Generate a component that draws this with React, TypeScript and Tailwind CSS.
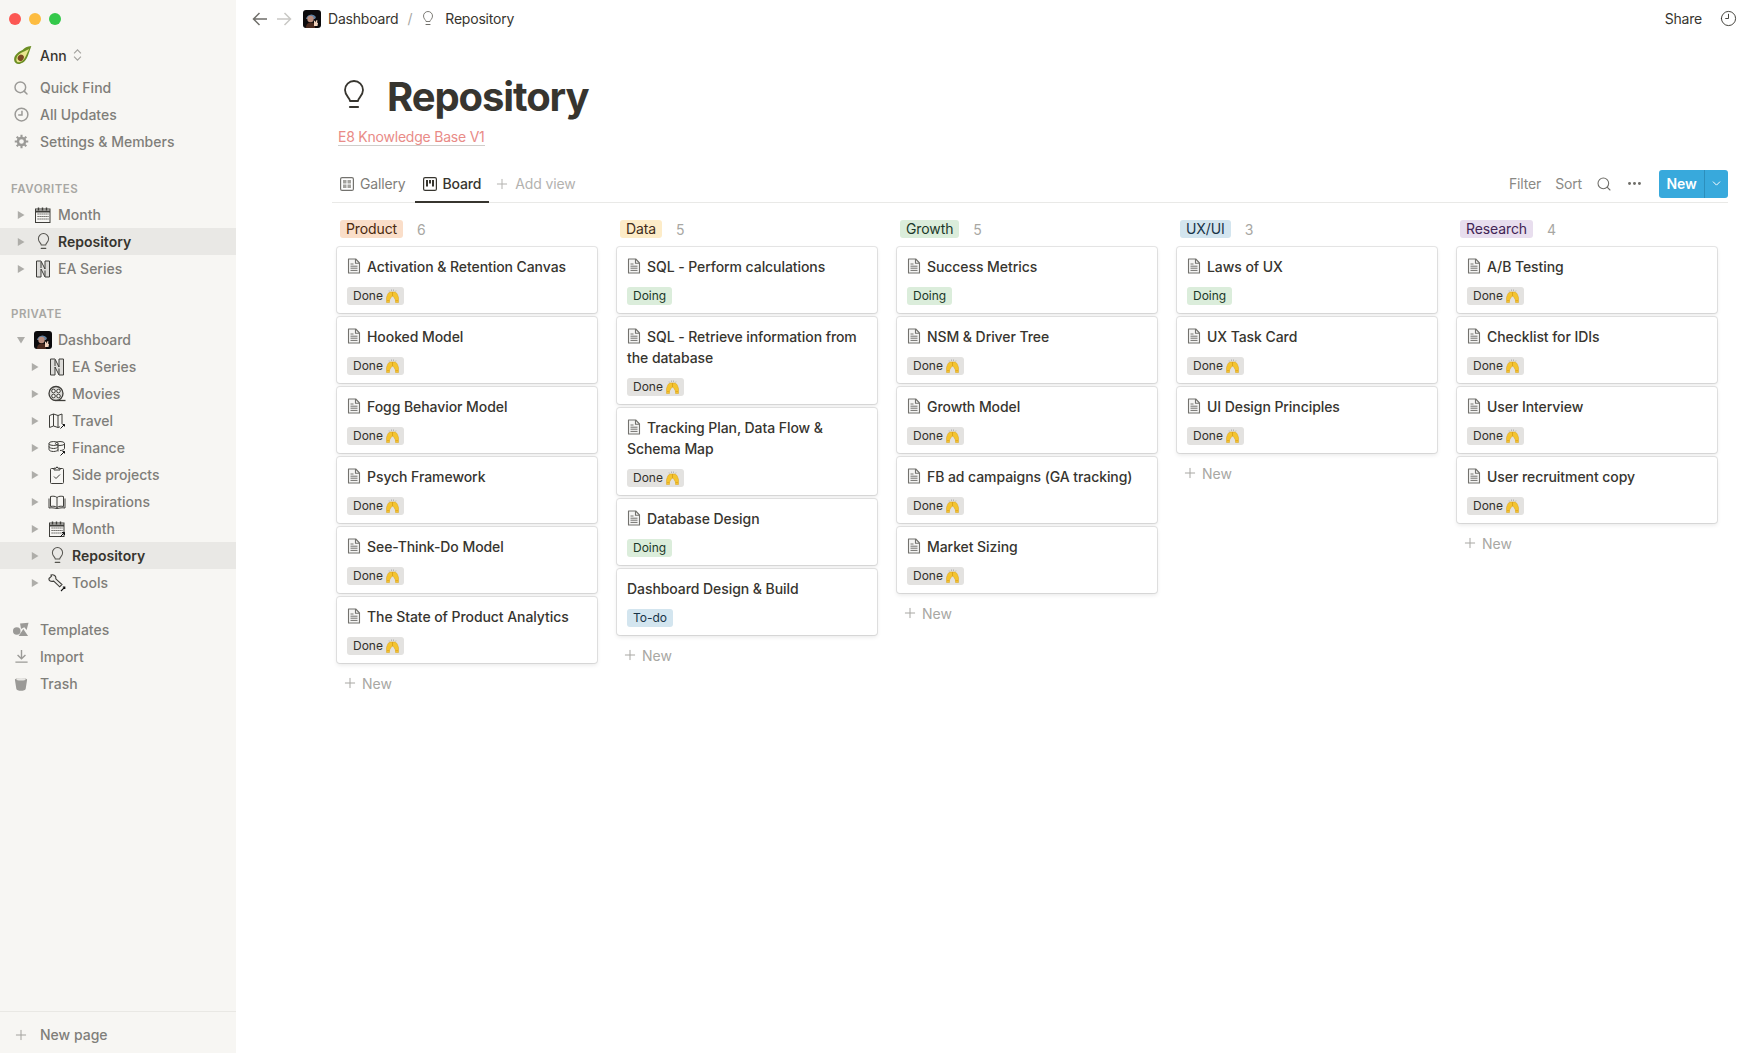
import React from "react";
import { ChevronDown, Clock3, MoreHorizontal, Plus, Search } from "lucide-react";

type IconProps = { className?: string };

// Hand drawn notion style icons
const Bulb = ({ className = "" }: IconProps) => (
  <svg viewBox="0 0 22 30" fill="none" stroke="currentColor" strokeWidth="1.800" className={className}>
    <path d="M7 21c0-3-5-5-5-11a9 9 0 0 1 18 0c0 6-5 8-5 11z" strokeLinejoin="round" />
    <path d="M7 27h8" strokeLinecap="round" strokeWidth="2.200" />
  </svg>
);

const PageIcon = () => (
  <svg viewBox="0 0 14 16" fill="none" stroke="#73726e" strokeWidth="1.100" className="h-4 w-[14px] shrink-0">
    <path d="M1.500 1h7.200l3.800 4v10h-11z" fill="#f5f5f4" strokeLinejoin="round" />
    <path d="M8.500 1v4.200h4" />
    <path d="M3.500 6h3M3.500 8.200h7M3.500 10.200h7M3.500 12.400h7" strokeWidth="1" />
  </svg>
);

const Hands = () => (
  <svg viewBox="0 0 13 14" className="ml-[3px] h-[14px] w-[13px]">
    <path d="M.5 13.500V8.500L2 4.500 4 3h5l2 1.500 1.500 4v5H9.500V11L8 8.500 6.500 7 5 8.500 3.500 11v2.500z" fill="#f4c430" stroke="#d9a21b" strokeWidth=".5" />
    <path d="M6.500 3v4" stroke="#c98f14" strokeWidth=".6" />
    <path d="M1 11.500h2.500M9.500 11.500H12" stroke="#e6ac1e" strokeWidth="1.200" />
    <path d="M3 1.500l.4 1M5.500.5v1.500M7.500.5v1.500M10 1.500l-.4 1" stroke="#999" strokeWidth=".6" />
  </svg>
);

const Avocado = () => (
  <svg viewBox="0 0 18 18" className="h-5 w-5">
    <path d="M16.500 1c-4 .5-6 1.500-8 3.500C5 6 1 9 1 13c0 3 2.500 4.500 5 4 4-1 6-3.500 7.500-7.500 1-3 2-5.500 3-8.500z" fill="#6b8e23" />
    <path d="M14.500 3.500C11 5 9.500 6 7.500 7 4.500 8.500 3 11 3 13c0 2 1.500 3 3 2.500 3-.8 4.500-3 5.800-6 .9-2 1.800-4 2.700-6z" fill="#e9e58c" />
    <ellipse cx="7" cy="11.500" rx="2.600" ry="3" transform="rotate(35 7 11.500)" fill="#7a4a21" />
  </svg>
);

const Avatar = ({ className = "" }: IconProps) => (
  <svg viewBox="0 0 18 18" className={className}>
    <rect width="18" height="18" rx="3" fill="#0b0a0c" />
    <path d="M3 9a5.500 5.500 0 0 1 10 -2l-1 2H4z" fill="#5f7f9f" />
    <circle cx="7.500" cy="9" r="3.200" fill="#b98d7d" />
    <path d="M3 18c0-4 2-5.500 5-5.500s4 2 4 5.500z" fill="#4a2a1e" />
    <path d="M11 16v-5l1-.5.500 2 1-2.500 1 .5-.5 2 1 .5-.5 3z" fill="#f2d3bd" />
  </svg>
);

const stroke = { fill: "none", stroke: "#3f3e3a", strokeWidth: 1 };

const Calendar = ({ arrow }: { arrow?: boolean }) => (
  <svg viewBox="0 0 18 18" {...stroke} className="h-[18px] w-[18px]">
    <rect x="1.500" y="3" width="14.500" height="13.500" />
    <path d="M1.500 5.500h14.500" strokeWidth="2" />
    <path d="M4.500 1.500v3M8.500 1.500v3M12.500 1.500v3" strokeWidth="1.400" />
    <path d="M3.500 8h11M3.500 10.500h11M3.500 13h11" strokeDasharray="1.200 .8" />
    {arrow && <path d="M12 17l4.500-4.500M14 12.500h2.500V15" stroke="#111" />}
  </svg>
);

const Netflix = () => (
  <svg viewBox="0 0 18 18" fill="#dddcd9" stroke="#3f3e3a" strokeWidth="1" className="h-[18px] w-[18px]">
    <path d="M2.500 1H7l4 8V1h4.500v16H11l-4-8v8H2.500z" />
    <path d="M7 2v6M11 10.500v6" />
  </svg>
);

const Reel = () => (
  <svg viewBox="0 0 18 18" {...stroke} className="h-[18px] w-[18px]">
    <circle cx="8" cy="8.500" r="7" strokeWidth="1.300" fill="#dddcd9" />
    <circle cx="5.500" cy="6" r="1.800" fill="#f7f6f3" />
    <circle cx="10.500" cy="6" r="1.800" fill="#f7f6f3" />
    <circle cx="5.500" cy="11" r="1.800" fill="#f7f6f3" />
    <circle cx="10.500" cy="11" r="1.800" fill="#f7f6f3" />
    <path d="M9 15.500h8.500" strokeWidth="1.300" />
  </svg>
);

const MapIcon = () => (
  <svg viewBox="0 0 18 18" {...stroke} className="h-[18px] w-[18px]">
    <path d="M1.500 3.500l4-1.500 4.500 1.500 4-1.500v10M1.500 3.500v12l4-1.500 4.500 1.500 2-.7M5.500 2v12M10 3.500v12" />
    <path d="M12.500 16.500l4-4M14.500 12.500h2v2" stroke="#111" />
  </svg>
);

const Coins = () => (
  <svg viewBox="0 0 18 18" {...stroke} className="h-[18px] w-[18px]">
    <ellipse cx="5.500" cy="4.500" rx="4.500" ry="2" />
    <ellipse cx="12" cy="4.500" rx="4.500" ry="2" />
    <path d="M1 4.500v6c0 1 2 2 4.500 2s4.500-1 4.500-2M1 7.500c0 1 2 2 4.500 2s4.500-1 4.500-2M16.500 4.500v5c0 1-2 2-4.500 2" />
    <path d="M10 4.500v8" />
    <path d="M12.500 16.500l4-4M14.500 12.500h2v2" stroke="#111" />
  </svg>
);

const Clipboard = () => (
  <svg viewBox="0 0 18 18" {...stroke} className="h-[18px] w-[18px]">
    <rect x="2.500" y="2.500" width="13" height="15" rx="1" />
    <path d="M6 4V2.200h2L9 .8l1 1.400h2V4z" fill="#f7f6f3" />
    <path d="M6 10.500l2 2 4-4" />
  </svg>
);

const Book = () => (
  <svg viewBox="0 0 18 18" {...stroke} className="h-[18px] w-[18px]">
    <path d="M9 4.500C7.500 3 4.500 3 2.500 3.500v10c2-.5 5-.5 6.500 1 1.500-1.500 4.500-1.500 6.500-1v-10C13.500 3 10.500 3 9 4.500zM9 4.500v10" />
    <path d="M1 5.500V15c3-.5 5 0 8 .5 3-.5 5-1 8-.5V5.500" />
  </svg>
);

const Wrench = () => (
  <svg viewBox="0 0 18 18" fill="#eeede9" stroke="#3f3e3a" strokeWidth="1.100" className="h-[18px] w-[18px]">
    <path d="M1 4.500L3.500 2.200 3 1C5.800.2 8.300 2 7.800 4.800l6.200 5.700-2.300 2.300-6-5.700C3 7.800.5 6.800 1 4.500z" />
    <path d="M13 17l3.800-3.800M14.800 13h2v2" stroke="#111" />
  </svg>
);

const Caret = ({ open }: { open?: boolean }) => (
  <svg viewBox="0 0 8 8" className="h-2 w-2 shrink-0 fill-[#aeada9]">
    {open ? <path d="M0 1h8L4 7.500z" /> : <path d="M.8 0l6.700 4-6.700 4z" />}
  </svg>
);

const Gear = () => (
  <svg viewBox="0 0 16 16" className="h-[15px] w-[15px]" fill="none" stroke="#9b9a97">
    <circle cx="8" cy="8" r="3.800" strokeWidth="2.600" />
    <path d="M8 .8v2.400M8 12.800v2.400M.8 8h2.400M12.800 8h2.400M2.900 2.900l1.700 1.700M11.400 11.400l1.700 1.700M2.900 13.100l1.700-1.700M11.400 4.600l1.700-1.700" strokeWidth="2.200" />
  </svg>
);

const Updates = () => (
  <svg viewBox="0 0 16 16" className="h-[15px] w-[15px]" fill="none" stroke="#9b9a97" strokeWidth="1.600">
    <circle cx="8" cy="8" r="6.800" />
    <path d="M8.500 4v4.500H4.500" />
  </svg>
);

const Shapes = () => (
  <svg viewBox="0 0 17 15" className="h-[15px] w-[17px] fill-[#9b9a97]">
    <circle cx="4" cy="9" r="4" />
    <path d="M7.500 1l9-.8-2 7.800-2.500-3-3.500 2zM11 7l5 7.500H6z" />
  </svg>
);

const ImportIcon = () => (
  <svg viewBox="0 0 16 16" className="h-[15px] w-[15px]" fill="none" stroke="#9b9a97" strokeWidth="1.500">
    <path d="M8 1v9M3.800 6.500L8 10.500l4.200-4M1.500 14h13" />
  </svg>
);

const TrashIcon = () => (
  <svg viewBox="0 0 14 16" className="h-[15px] w-[14px]">
    <path d="M.5 4c0-2 13-2 13 0l-1.500 9.500c-.3 3-9.700 3-10 0z" fill="#9b9a97" />
    <ellipse cx="7" cy="3.500" rx="5" ry="1.300" fill="#e8e7e4" />
  </svg>
);

const GalleryIcon = () => (
  <svg viewBox="0 0 14 14" className="h-[14px] w-[14px]" fill="none" stroke="#73726e">
    <rect x=".6" y=".6" width="12.800" height="12.800" rx="1.500" strokeWidth="1.200" />
    <path d="M3 3h3.500v3.500H3zM7.500 3H11v3.500H7.500zM3 7.500h3.500V11H3zM7.500 7.500H11V11H7.500z" fill="#a3a29e" stroke="none" />
  </svg>
);

const BoardIcon = () => (
  <svg viewBox="0 0 14 14" className="h-[14px] w-[14px]" fill="none" stroke="#37352f">
    <rect x=".6" y=".6" width="12.800" height="12.800" rx="1.500" strokeWidth="1.200" />
    <path d="M3 3h2v6.500H3zM6 3h2v3.500H6zM9 3h2v6.500H9z" fill="#37352f" stroke="none" />
  </svg>
);

const TopRow = ({ icon, label }: { icon: React.ReactNode; label: string }) => (
  <div className="flex h-[27px] items-center pl-[13px] text-[14px] font-medium text-[#7f7e7a]">
    <span className="flex w-4 items-center justify-center">{icon}</span>
    <span className="ml-[11px]">{label}</span>
  </div>
);

const TreeRow = ({
  icon,
  label,
  depth = 0,
  active,
  open,
}: {
  icon: React.ReactNode;
  label: string;
  depth?: number;
  active?: boolean;
  open?: boolean;
}) => (
  <div
    className={`flex h-[27px] items-center text-[14px] ${depth ? "pl-[30.500px]" : "pl-[16.500px]"} ${
      active ? "bg-[#e9e8e5] font-semibold text-[#37352f]" : "font-medium text-[#7f7e7a]"
    }`}
  >
    <Caret open={open} />
    <span className="ml-[9.500px] flex w-[18px] items-center justify-center">{icon}</span>
    <span className="ml-[6px]">{label}</span>
  </div>
);

const Sidebar = () => (
  <aside className="flex h-full w-[236px] shrink-0 flex-col bg-[#f7f6f3]">
    <div className="flex h-[38px] items-center gap-2 pl-[9px]">
      <span className="h-3 w-3 rounded-full bg-[#fc5753]" />
      <span className="h-3 w-3 rounded-full bg-[#fdbc40]" />
      <span className="h-3 w-3 rounded-full bg-[#34c84a]" />
    </div>
    <div className="mb-[2px] flex h-[34px] items-center pl-[13px] text-[14px] font-medium text-[#37352f]">
      <Avocado />
      <span className="ml-[7px]">Ann</span>
      <svg viewBox="0 0 10 14" className="ml-[6px] h-[12px] w-[9px]" fill="none" stroke="#a3a29e" strokeWidth="1.300">
        <path d="M1 5l4-4 4 4M1 9l4 4 4-4" />
      </svg>
    </div>
    <TopRow icon={<Search size={16} strokeWidth={2.200} color="#9b9a97" />} label="Quick Find" />
    <TopRow icon={<Updates />} label="All Updates" />
    <TopRow icon={<Gear />} label="Settings & Members" />

    <div className="mt-[26px] mb-1 pl-[11px] text-[11.500px] leading-4 font-semibold tracking-[0.5px] text-[#a8a7a3]">FAVORITES</div>
    <TreeRow icon={<Calendar />} label="Month" />
    <TreeRow icon={<Bulb className="h-[17px] w-[13px] text-[#55544f]" />} label="Repository" active />
    <TreeRow icon={<Netflix />} label="EA Series" />

    <div className="mt-6 mb-1 pl-[11px] text-[11.500px] leading-4 font-semibold tracking-[0.5px] text-[#a8a7a3]">PRIVATE</div>
    <TreeRow icon={<Avatar className="h-[18px] w-[18px]" />} label="Dashboard" open />
    <TreeRow depth={1} icon={<Netflix />} label="EA Series" />
    <TreeRow depth={1} icon={<Reel />} label="Movies" />
    <TreeRow depth={1} icon={<MapIcon />} label="Travel" />
    <TreeRow depth={1} icon={<Coins />} label="Finance" />
    <TreeRow depth={1} icon={<Clipboard />} label="Side projects" />
    <TreeRow depth={1} icon={<Book />} label="Inspirations" />
    <TreeRow depth={1} icon={<Calendar arrow />} label="Month" />
    <TreeRow depth={1} icon={<Bulb className="h-[17px] w-[13px] text-[#55544f]" />} label="Repository" active />
    <TreeRow depth={1} icon={<Wrench />} label="Tools" />

    <div className="mt-5">
      <TopRow icon={<Shapes />} label="Templates" />
      <TopRow icon={<ImportIcon />} label="Import" />
      <TopRow icon={<TrashIcon />} label="Trash" />
    </div>

    <div className="mt-auto h-[42px] border-t border-[#e9e8e4] pt-[9px]">
      <TopRow icon={<Plus size={18} strokeWidth={1.500} color="#a3a29e" />} label="New page" />
    </div>
  </aside>
);

const TopBar = () => (
  <div className="flex h-[37px] shrink-0 items-center text-[14px] tracking-[-0.2px] text-[#37352f]">
    <svg viewBox="0 0 16 14" className="ml-[16px] h-[14px] w-[16px]" fill="none" stroke="#6f6e69" strokeWidth="1.500">
      <path d="M15 7H1.500M7.500 1L1.500 7l6 6" />
    </svg>
    <svg viewBox="0 0 16 14" className="ml-[8px] h-[14px] w-[16px]" fill="none" stroke="#c9c8c5" strokeWidth="1.500">
      <path d="M1 7h13.500M8.500 1l6 6-6 6" />
    </svg>
    <Avatar className="ml-[11px] h-[18px] w-[18px]" />
    <span className="ml-[7px]">Dashboard</span>
    <span className="ml-[9px] text-[#a8a7a3]">/</span>
    <Bulb className="ml-[10px] h-[15px] w-[12px] text-[#6f6e69]" />
    <span className="ml-[11px]">Repository</span>
    <span className="ml-auto">Share</span>
    <Clock3 size={17} strokeWidth={1.300} className="mr-[1px] ml-[18px] -scale-x-100" />
  </div>
);

type CardData = { title: string; status?: "done" | "doing" | "todo"; noIcon?: boolean };

const Card = ({ title, status = "done", noIcon }: CardData) => (
  <div className="rounded-[3px] bg-white px-[10px] pt-[9px] pb-2 shadow-[0_0_0_1px_rgba(15,15,15,0.1),0_2px_4px_rgba(15,15,15,0.1)]">
    <div className="text-[14px] leading-[21px] font-medium tracking-[-0.07px] text-[#37352f]">
      {!noIcon && (
        <span className="mr-[6px] inline-block h-[21px] w-[14px] pt-[2px] align-top">
          <PageIcon />
        </span>
      )}
      {title}
    </div>
    <div className="mt-[10px] flex">
      {status === "done" && (
        <span className="flex h-[18px] items-center rounded-[3px] bg-[#e3e2e0] pr-[5px] pl-[6px] text-[12px] text-[#32302c]">
          Done
          <Hands />
        </span>
      )}
      {status === "doing" && (
        <span className="flex h-[18px] items-center rounded-[3px] bg-[#dbeddb] px-[6px] text-[12px] text-[#1c3829]">Doing</span>
      )}
      {status === "todo" && (
        <span className="flex h-[18px] items-center rounded-[3px] bg-[#d3e5ef] px-[6px] text-[12px] text-[#183347]">To-do</span>
      )}
    </div>
  </div>
);

const columns: { name: string; tagClass: string; count: number; cards: CardData[] }[] = [
  {
    name: "Product",
    tagClass: "bg-[#fadec9] text-[#49290e]",
    count: 6,
    cards: [
      { title: "Activation & Retention Canvas" },
      { title: "Hooked Model" },
      { title: "Fogg Behavior Model" },
      { title: "Psych Framework" },
      { title: "See-Think-Do Model" },
      { title: "The State of Product Analytics" },
    ],
  },
  {
    name: "Data",
    tagClass: "bg-[#fdecc8] text-[#402c1b]",
    count: 5,
    cards: [
      { title: "SQL - Perform calculations", status: "doing" },
      { title: "SQL - Retrieve information from the database" },
      { title: "Tracking Plan, Data Flow & Schema Map" },
      { title: "Database Design", status: "doing" },
      { title: "Dashboard Design & Build", status: "todo", noIcon: true },
    ],
  },
  {
    name: "Growth",
    tagClass: "bg-[#dbeddb] text-[#1c3829]",
    count: 5,
    cards: [
      { title: "Success Metrics", status: "doing" },
      { title: "NSM & Driver Tree" },
      { title: "Growth Model" },
      { title: "FB ad campaigns (GA tracking)" },
      { title: "Market Sizing" },
    ],
  },
  {
    name: "UX/UI",
    tagClass: "bg-[#d3e5ef] text-[#183347]",
    count: 3,
    cards: [{ title: "Laws of UX", status: "doing" }, { title: "UX Task Card" }, { title: "UI Design Principles" }],
  },
  {
    name: "Research",
    tagClass: "bg-[#e8deee] text-[#412454]",
    count: 4,
    cards: [{ title: "A/B Testing" }, { title: "Checklist for IDIs" }, { title: "User Interview" }, { title: "User recruitment copy" }],
  },
];

const Board = () => (
  <div className="flex gap-5 overflow-hidden pt-[17px] pb-1 pl-[5px]">
    {columns.map((col) => (
      <div key={col.name} className="w-[260px] shrink-0">
        <div className="flex h-[18px] items-center pl-[3px] text-[14px] tracking-[-0.1px]">
          <span className={`rounded-[3px] px-[6px] leading-[18px] ${col.tagClass}`}>{col.name}</span>
          <span className="ml-[14px] text-[#a8a7a3]">{col.count}</span>
        </div>
        <div className="mt-[9px] flex flex-col gap-1">
          {col.cards.map((c) => (
            <Card key={c.title} {...c} />
          ))}
        </div>
        <div className="mt-1 flex h-8 items-center pl-[5px] text-[14px] text-[#a8a7a3]">
          <Plus size={16} strokeWidth={1.500} />
          <span className="ml-[4px]">New</span>
        </div>
      </div>
    ))}
    {/* next column, cut off by the window */}
    <div className="mt-[27px] flex w-[260px] shrink-0 flex-col gap-1">
      <div className="h-[66px] rounded-[3px] bg-white shadow-[0_0_0_1px_rgba(15,15,15,0.1),0_2px_4px_rgba(15,15,15,0.1)]" />
      <div className="h-[66px] rounded-[3px] bg-white shadow-[0_0_0_1px_rgba(15,15,15,0.1),0_2px_4px_rgba(15,15,15,0.1)]" />
    </div>
  </div>
);

export default function App() {
  return (
    <div className="flex h-[1053px] w-[1738px] overflow-hidden bg-white [font-family:Inter,sans-serif]">
      <Sidebar />
      <main className="flex min-w-0 flex-1 flex-col">
        <TopBar />
        <div className="pt-[36px] pr-[10px] pl-[96px]">
          <div className="flex h-[48px] items-center">
            <Bulb className="mb-[5px] ml-[11px] h-[30px] w-[22px] text-[#37352f]" />
            <h1 className="ml-[22px] text-[40px] leading-[48px] font-bold tracking-[-1.100px] text-[#37352f]">Repository</h1>
          </div>
          <div className="mt-[5px] pl-[6px] text-[14px] leading-[21px] tracking-[-0.22px]">
            <span className="border-b border-[#cfcecb] text-[#e98b87]">E8 Knowledge Base V1</span>
          </div>

          {/* View tabs */}
          <div className="mt-[18px] flex h-[38px] items-stretch border-b border-[#e9e9e7] text-[14px] tracking-[-0.15px]">
            <div className="flex items-center pl-2 text-[#7f7e7a]">
              <GalleryIcon />
              <span className="ml-[6px]">Gallery</span>
            </div>
            <div className="relative ml-[9px] flex items-center px-2 font-medium text-[#37352f]">
              <BoardIcon />
              <span className="ml-[6px]">Board</span>
              <span className="absolute right-0 -bottom-px left-0 h-[2px] bg-[#37352f]" />
            </div>
            <div className="ml-[5px] flex items-center text-[#b3b2af]">
              <Plus size={16} strokeWidth={1.500} />
              <span className="ml-[5px]">Add view</span>
            </div>
            <div className="ml-auto flex items-center text-[#8a8985]">
              <span>Filter</span>
              <span className="ml-[14px]">Sort</span>
              <Search size={16} strokeWidth={1.600} className="ml-[14px] text-[#6f6e69]" />
              <MoreHorizontal size={17} strokeWidth={2.200} className="ml-[14px] text-[#6f6e69]" />
              <div className="ml-4 flex h-7 w-[69px] items-stretch overflow-hidden rounded-[3px] bg-[#38a9dc] text-white">
                <span className="flex w-[45px] items-center justify-center font-semibold">New</span>
                <span className="flex flex-1 items-center justify-center border-l border-[#2c8fbc]">
                  <ChevronDown size={13} strokeWidth={1.800} />
                </span>
              </div>
            </div>
          </div>
          <Board />
        </div>
      </main>
    </div>
  );
}
